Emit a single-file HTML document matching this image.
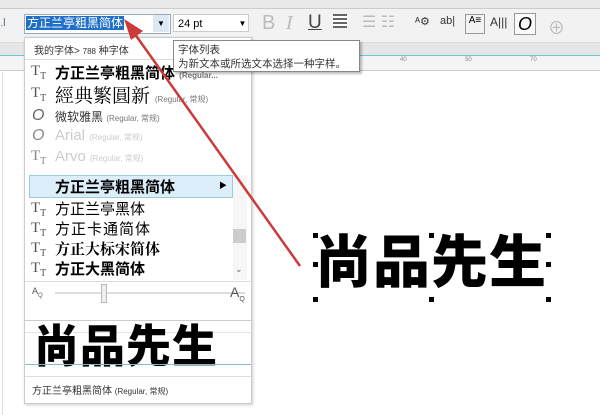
<!DOCTYPE html><html><head><meta charset="utf-8"><style>
body{margin:0;width:600px;height:415px;overflow:hidden;background:#fff;font-family:"Liberation Sans","Noto Sans CJK SC",sans-serif;position:relative}
.a{position:absolute}
.cj{font-family:"Liberation Sans","Noto Sans CJK SC",sans-serif}
.tt{position:absolute;left:6px;font-family:"Liberation Serif",serif;color:#555;font-size:15px}
.g{font-size:8px;color:#777}
.h{position:absolute;width:5px;height:5px;background:#000}
</style></head><body>
<div class="a" style="left:0;top:0;width:600px;height:8px;background:#e8e8e8;border-bottom:1px solid #ccc"></div>
<div class="a" style="left:0;top:9px;width:600px;height:33px;background:#f2f2f2;border-bottom:1px solid #ddd"></div>
<div class="a" style="left:0;top:15px;font-size:12px;color:#357">꜌</div>
<div class="a" style="left:24px;top:14px;width:145px;height:18px;background:#fff;border:1px solid #9ab"></div>
<div class="a cj" style="left:26px;top:16px;height:14px;background:#1e6fc9;color:#fff;font-size:12px;line-height:14px;padding:0 1px">方正兰亭粗黑简体</div>
<div class="a" style="left:153px;top:15px;width:16px;height:17px;background:#dde8f4;font-size:8px;text-align:center;line-height:17px">▼</div>
<div class="a" style="left:173px;top:14px;width:76px;height:18px;background:#fff;border:1px solid #ccc;font-size:11px;line-height:18px;padding-left:4px;box-sizing:border-box">24 pt</div>
<div class="a" style="left:236px;top:15px;width:13px;height:17px;font-size:8px;text-align:center;line-height:17px">▼</div>
<div class="a" style="left:262px;top:12px;font-size:20px;color:#bbb">B</div>
<div class="a" style="left:286px;top:12px;font-size:20px;color:#bbb;font-style:italic;font-family:'Liberation Serif'">I</div>
<div class="a" style="left:308px;top:12px;font-size:19px;color:#444;text-decoration:underline">U</div>
<div class="a" style="left:333px;top:14px;width:14px;height:14px;background:repeating-linear-gradient(#666 0 2px,#fff 2px 4px)"></div>
<div class="a" style="left:362px;top:12px;font-size:16px;color:#bbb">☰ ☷</div>
<div class="a" style="left:415px;top:15px;font-size:11px;color:#333">ᴬ⚙</div>
<div class="a" style="left:440px;top:15px;font-size:11px;color:#333">ab|</div>
<div class="a" style="left:465px;top:14px;width:18px;height:18px;border:1px solid #999;font-size:10px;text-align:center">A≡</div>
<div class="a" style="left:490px;top:15px;font-size:12px;color:#333">A|||</div>
<div class="a" style="left:514px;top:13px;width:20px;height:20px;border:1px solid #999;background:#fafafa;font-size:18px;font-style:italic;text-align:center;line-height:20px">O</div>
<div class="a" style="left:548px;top:14px;font-size:17px;color:#bbb">⊕</div>
<div class="a" style="left:0;top:43px;width:600px;height:12px;background:#e6e6e6"></div>
<div class="a" style="left:0;top:55px;width:600px;height:1px;background:#6cc"></div>
<div class="a" style="left:0;top:56px;width:600px;height:14px;background:#f4f4f4;border-bottom:1px solid #ccc;font-size:6px;color:#888"><span class="a" style="left:400px;top:1px">40</span><span class="a" style="left:465px;top:1px">50</span><span class="a" style="left:530px;top:1px">70</span></div>
<div class="a" style="left:2px;top:72px;width:1px;height:343px;background:#ddd"></div>
<div class="a" style="left:24px;top:37px;width:226px;height:365px;background:#fff;border:1px solid #ccc;box-shadow:1px 1px 3px rgba(0,0,0,.2)">
 <div class="a" style="left:9px;top:4px;font-size:10px;color:#333">我的字体&gt; <span style="font-size:8px">788</span> 种字体</div>
 <div class="a" style="left:0;top:21px;width:226px;height:1px;background:#ddd"></div>
 <div class="tt" style="top:25px">T<sub style="font-size:10px">T</sub></div><div class="a" style="left:30px;top:24px;font-size:15px;font-weight:bold">方正兰亭粗黑简体 <span class="g">(Regular...</span></div>
 <div class="tt" style="top:47px">T<sub style="font-size:10px">T</sub></div><div class="a" style="left:30px;top:43px;font-size:19px;font-family:'Noto Serif CJK SC',serif">經典繁圓新 <span class="g" style="font-family:'Liberation Sans'">(Regular, 常规)</span></div>
 <div class="a" style="left:7px;top:69px;font-size:16px;font-style:italic;color:#666">O</div><div class="a" style="left:30px;top:70px;font-size:12px;color:#333">微软雅黑 <span class="g">(Regular, 常规)</span></div>
 <div class="a" style="left:7px;top:89px;font-size:16px;font-style:italic;color:#888">O</div><div class="a" style="left:30px;top:89px;font-size:15px;color:#ccc">Arial <span class="g" style="color:#ccc">(Regular, 常规)</span></div>
 <div class="tt" style="top:110px;color:#888">T<sub style="font-size:10px">T</sub></div><div class="a" style="left:30px;top:110px;font-size:15px;color:#ccc">Arvo <span class="g" style="color:#ccc">(Regular, 常规)</span></div>
 <div class="a" style="left:4px;top:137px;width:202px;height:21px;background:#dbeefa;border:1px solid #9cd"></div>
 <div class="a" style="left:30px;top:138px;font-size:15px;font-weight:bold">方正兰亭粗黑简体</div><div class="a" style="left:194px;top:142px;font-size:8px">▶</div>
 <div class="tt" style="top:162px">T<sub style="font-size:10px">T</sub></div><div class="a" style="left:30px;top:160px;font-size:15px">方正兰亭黑体</div>
 <div class="tt" style="top:182px">T<sub style="font-size:10px">T</sub></div><div class="a" style="left:30px;top:180px;font-size:15px;letter-spacing:1px">方正卡通简体</div>
 <div class="tt" style="top:202px">T<sub style="font-size:10px">T</sub></div><div class="a" style="left:30px;top:200px;font-size:15px;font-family:'Noto Serif CJK SC',serif;font-weight:bold">方正大标宋简体</div>
 <div class="tt" style="top:222px">T<sub style="font-size:10px">T</sub></div><div class="a" style="left:30px;top:220px;font-size:15px;font-weight:bold">方正大黑简体</div>
 <div class="a" style="left:208px;top:137px;width:14px;height:105px;background:#f6f6f6"></div>
 <div class="a" style="left:208px;top:191px;width:13px;height:14px;background:#ccc"></div>
 <div class="a" style="left:210px;top:226px;font-size:9px;color:#666">⌄</div>
 <div class="a" style="left:0;top:243px;width:226px;height:1px;background:#ddd"></div>
 <div class="a" style="left:7px;top:248px;font-size:9px;color:#555">A<sub style="font-size:6px">Q</sub></div>
 <div class="a" style="left:30px;top:254px;width:190px;height:2px;background:#ddd"></div>
 <div class="a" style="left:76px;top:246px;width:4px;height:17px;border:1px solid #bbb;background:#eee"></div>
 <div class="a" style="left:205px;top:246px;font-size:14px;color:#555">A<sub style="font-size:7px">Q</sub></div>
 <div class="a" style="left:0;top:282px;width:226px;height:1px;background:#ccc"></div>
 <div class="a" style="left:0;top:294px;width:226px;height:1px;background:#e4e4e4"></div>
 <div class="a" style="left:9px;top:281px;font-size:45px;font-weight:900;line-height:56px;letter-spacing:1px">尚品先生</div>
 <div class="a" style="left:0;top:326px;width:226px;height:1px;background:#8bb"></div>
 <div class="a" style="left:0;top:338px;width:226px;height:1px;background:#ddd"></div>
 <div class="a" style="left:7px;top:344px;font-size:10px;color:#333">方正兰亭粗黑简体 <span style="font-size:8px">(Regular, 常规)</span></div>
</div>
<div class="a" style="left:173px;top:40px;width:187px;height:32px;background:#fff;border:1px solid #888;box-shadow:2px 2px 2px rgba(0,0,0,.25);font-size:10.5px;line-height:14px;color:#333;padding:2px 4px;box-sizing:border-box">字体列表<br>为新文本或所选文本选择一种字样。</div>
<div class="a" style="left:315px;top:228px;font-size:57px;font-weight:900;letter-spacing:1px;line-height:70px">尚品先生</div>
<div class="h" style="left:313px;top:233px"></div><div class="h" style="left:429px;top:233px"></div><div class="h" style="left:546px;top:233px"></div>
<div class="h" style="left:313px;top:262px"></div><div class="h" style="left:546px;top:262px"></div>
<div class="h" style="left:313px;top:297px"></div><div class="h" style="left:429px;top:297px"></div><div class="h" style="left:546px;top:297px"></div>
<svg class="a" style="left:0;top:0" width="600" height="415"><line x1="300" y1="266" x2="132" y2="30" stroke="#cc3a3a" stroke-width="2.5"/><polygon points="124,19 143,31 131,40" fill="#cc3a3a"/></svg>
</body></html>
